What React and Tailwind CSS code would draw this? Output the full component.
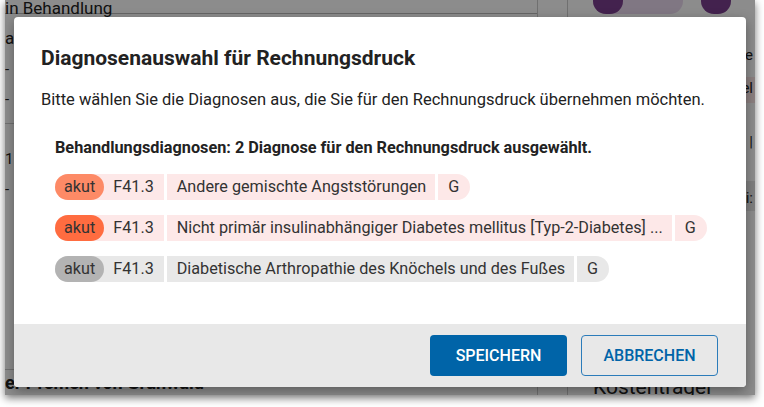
const rows = [
  {
    tone: "bg-[#fd8a66]",
    bg: "bg-[#fde8e8]",
    code: "F41.3",
    text: "Andere gemischte Angststörungen",
  },
  {
    tone: "bg-[#ff6c40]",
    bg: "bg-[#fde8e8]",
    code: "F41.3",
    text: "Nicht primär insulinabhängiger Diabetes mellitus [Typ-2-Diabetes] ...",
  },
  {
    tone: "bg-[#b3b3b3]",
    bg: "bg-[#e8e8e8]",
    code: "F41.3",
    text: "Diabetische Arthropathie des Knöchels und des Fußes",
  },
];

function DiagnoseChip({ tone, bg, code, text }) {
  return (
    <div className="flex items-stretch h-[26px] text-[16.2px] text-[#333]">
      <div className={`flex items-center rounded-l-full ${bg}`}>
        <span className={`flex items-center h-full rounded-full px-[9px] ${tone}`}>
          akut
        </span>
        <span className="pl-[9px] pr-[10px]">{code}</span>
      </div>
      <span className={`ml-[3px] flex items-center pl-[10px] pr-[9px] ${bg}`}>
        {text}
      </span>
      <span className={`ml-[3px] flex items-center pl-[10px] pr-[11px] rounded-r-full ${bg}`}>
        G
      </span>
    </div>
  );
}

function Background() {
  return (
    <div className="flex h-full text-[#222]">
      <div className="flex flex-col w-[533px] border-r border-[#ccc]">
        <div className="h-[16px] -mt-[2px] text-[17px] leading-[20px] border-b border-[#bbb]">
          in Behandlung
        </div>
        <div className="pt-[12px] text-[17px]">a</div>
        <div className="pt-[6px] text-[15px]">-</div>
        <div className="pt-[8px] text-[15px]">-</div>
        <div className="mt-[12px] border-b border-[#ccc]" />
        <div className="pt-[24px] text-[15px]">1</div>
        <div className="pt-[8px] text-[15px]">-</div>
        <div className="flex-1" />
        <div className="border-t border-[#ccc] pt-[4px] pb-[3px] text-[18px] font-bold leading-[18px]">
          er Premen von Grunwald
        </div>
      </div>
      <div className="w-[30px] border-r border-[#ccc]" />
      <div className="flex-1 flex flex-col pl-[25px]">
        <div className="flex gap-[18px] -mt-[12px]">
          <div className="flex items-center w-[90px] h-[26px] rounded-full bg-[#ead9ef]">
            <div className="w-[30px] h-[26px] rounded-full bg-[#7b3f8e]" />
          </div>
          <div className="w-[30px] h-[26px] rounded-full bg-[#7b3f8e]" />
        </div>
        <div className="pt-[30px] text-right text-[15px] pr-[2px]">se</div>
        <div className="mt-[10px] h-[26px] bg-[#fde8e8] text-right text-[15px] pr-[2px]">el</div>
        <div className="pt-[28px] text-right text-[15px] pr-[2px]">t |</div>
        <div className="mt-[28px] h-[30px] bg-[#e8e8e8] text-right text-[15px] pr-[2px] pt-[6px]">ti:</div>
        <div className="flex-1" />
        <div className="text-[21px] leading-[24px] -mb-[4px]">Kostenträger</div>
      </div>
    </div>
  );
}

export default function App() {
  return (
    <div className="w-[764px] h-[407px] bg-white font-['Roboto',sans-serif] overflow-hidden">
      <div className="relative ml-[5px] w-[750px] h-[395px] bg-white shadow-[0_3px_8px_rgba(0,0,0,0.55)] overflow-hidden">
        <Background />
        <div className="absolute inset-0 bg-black/45" />
        <div className="absolute inset-0 pl-[9px] pr-[9px] pt-[17px] pb-[8px] flex">
          <div className="flex-1 flex flex-col bg-white rounded-[4px] overflow-hidden shadow-[0_4px_12px_rgba(0,0,0,0.35)]">
            <div className="flex-1 pl-[27px] pr-[20px] pt-[27px]">
              <h2 className="text-[21px] leading-[28px] font-bold text-[#222]">
                Diagnosenauswahl für Rechnungsdruck
              </h2>
              <p className="mt-[17px] text-[16.5px] leading-[22px] text-[#222]">
                Bitte wählen Sie die Diagnosen aus, die Sie für den Rechnungsdruck übernehmen möchten.
              </p>
              <div className="pl-[14px] mt-[27px]">
                <div className="text-[16.25px] leading-[20px] font-bold text-[#222]">
                  Behandlungsdiagnosen: 2 Diagnose für den Rechnungsdruck ausgewählt.
                </div>
                <div className="mt-[16px] flex flex-col gap-[15px] items-start">
                  {rows.map((r, i) => (
                    <DiagnoseChip key={i} {...r} />
                  ))}
                </div>
              </div>
            </div>
            <div className="h-[63px] bg-[#e8e8e8] flex items-center justify-end gap-[14px] pr-[28px]">
              <button className="w-[137px] h-[41px] rounded-[4px] bg-[#0064a8] text-white text-[16px] font-medium">
                SPEICHERN
              </button>
              <button className="w-[137px] h-[41px] rounded-[4px] border border-[#2c7cba] text-[#0064a8] text-[16px] font-medium">
                ABBRECHEN
              </button>
            </div>
          </div>
        </div>
      </div>
    </div>
  );
}
